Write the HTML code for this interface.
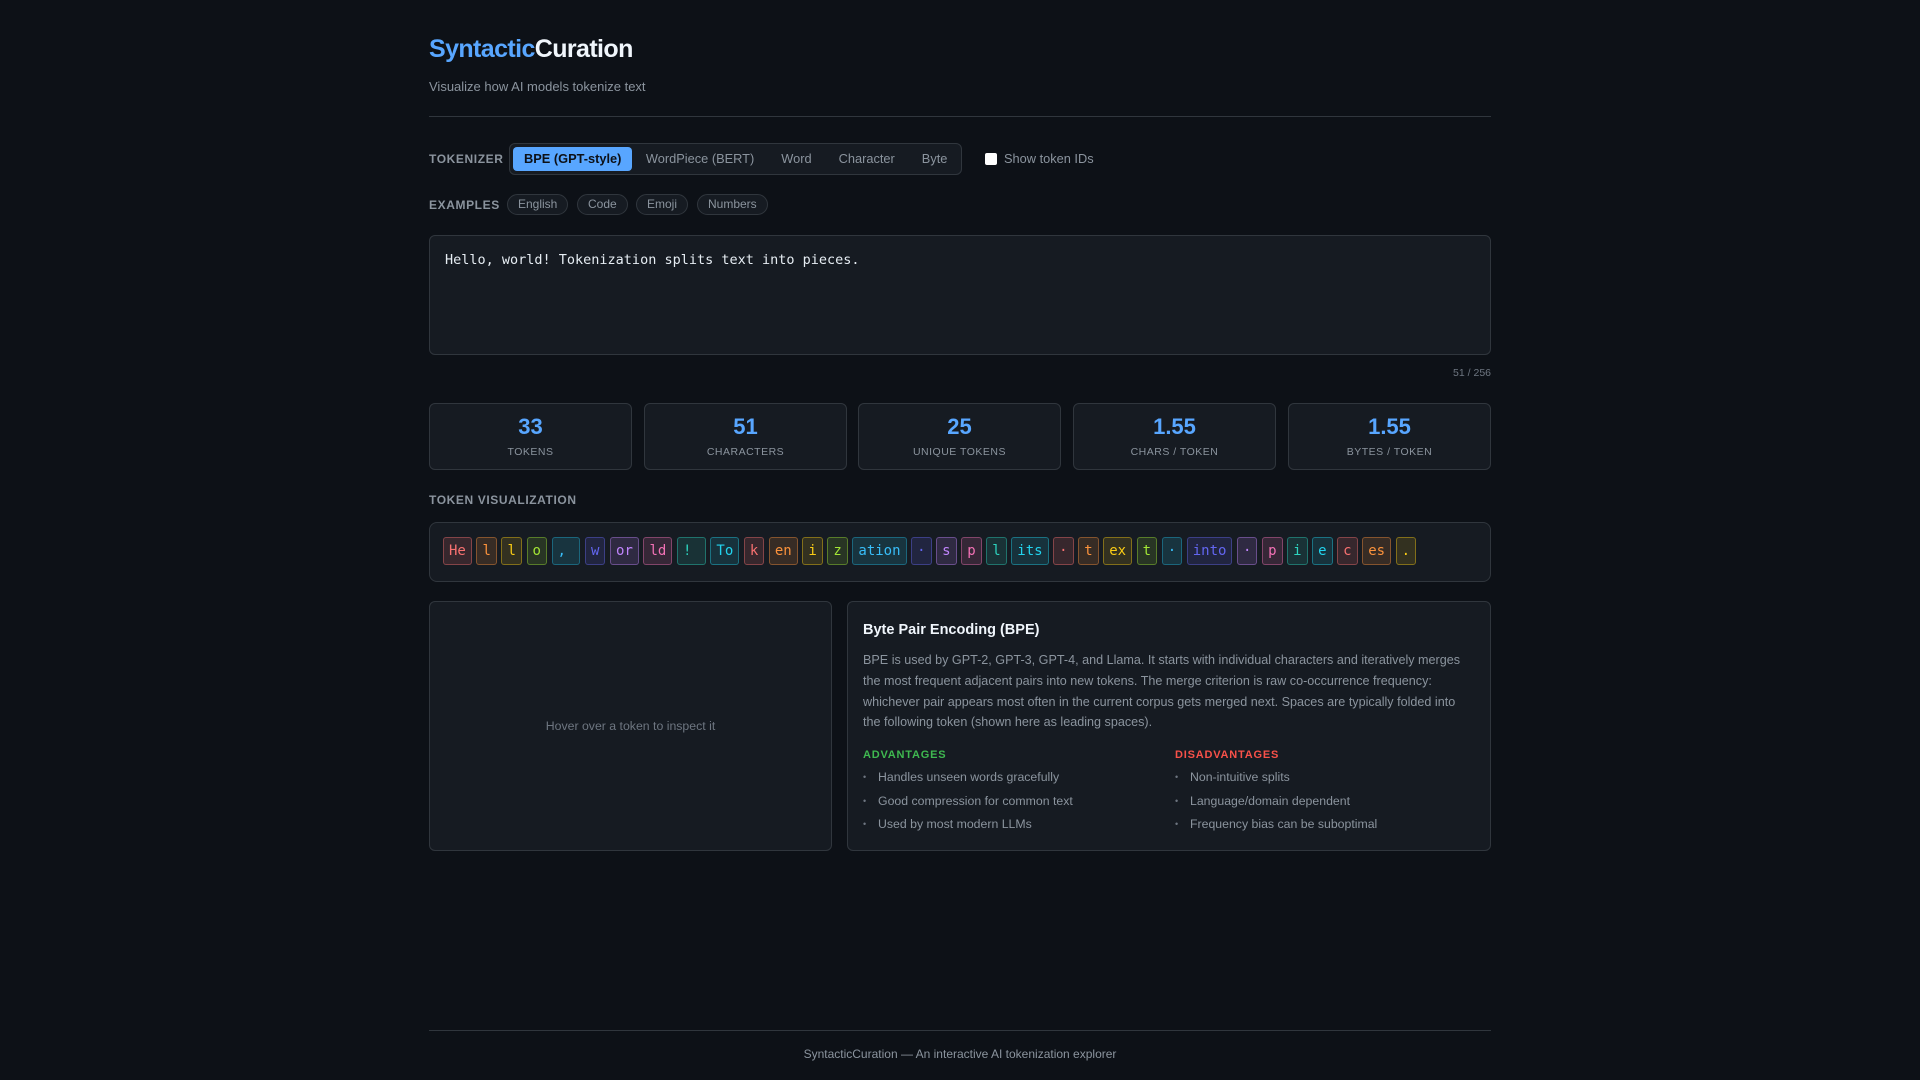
<!DOCTYPE html>
<html><head><meta charset="utf-8"><style>
*{box-sizing:border-box;margin:0;padding:0}
body{width:1920px;height:1080px;background:#0d1117;font-family:"Liberation Sans",sans-serif;color:#c9d1d9;position:relative;overflow:hidden}
.a{position:absolute}
.title{left:429px;top:35px;font-size:25px;font-weight:bold;letter-spacing:-0.6px;color:#f0f6fc}
.title span{color:#58a6ff}
.sub{left:429px;top:79px;font-size:13px;color:#8b949e}
.hr{left:429px;width:1062px;top:116px;height:1px;background:#30363d}
.lab{font-size:12px;font-weight:bold;letter-spacing:.6px;color:#8b949e}
.seg{left:509px;top:143px;width:453px;height:32px;border:1px solid #30363d;border-radius:6px;background:#161b22;display:flex;align-items:center;padding:0 3px;gap:0;white-space:nowrap}
.seg div{font-size:12.8px;color:#8b949e;padding:0 13.5px;height:24px;line-height:24px;border-radius:4px;white-space:nowrap}
.seg .on{background:#58a6ff;color:#0d1117;font-weight:bold;padding:0 11px}
.cb{left:985px;top:153px;width:12px;height:12px;background:#fff;border-radius:2px}
.pill{top:194px;height:21px;border:1px solid #30363d;border-radius:11px;background:#161b22;font-size:12px;color:#8b949e;line-height:19px;padding:0 10px}
.ta{left:429px;top:235px;width:1062px;height:120px;background:#161b22;border:1px solid #30363d;border-radius:6px;padding:16px 15px;font-family:"DejaVu Sans Mono",monospace;font-size:13.5px;color:#e6edf3}
.card{top:403px;width:203px;height:67px;background:#161b22;border:1px solid #30363d;border-radius:6px;text-align:center}
.card b{display:block;font-size:22px;color:#58a6ff;margin-top:10px;height:26px}
.card i{display:block;font-style:normal;font-size:10.5px;letter-spacing:.5px;color:#8b949e;margin-top:6px}
.tb{left:429px;top:522px;width:1062px;height:60px;background:#161b22;border:1px solid #30363d;border-radius:8px;padding:14px 0 0 13px;display:flex;gap:4.6px}
.t{height:28px;line-height:26px;padding:0 5px;border-radius:3px;border:1px solid;font-family:"DejaVu Sans Mono",monospace;font-size:14px}
.c0{color:#f87171;background:rgba(248,113,113,.15);border-color:rgba(248,113,113,.4)}
.c1{color:#fb923c;background:rgba(251,146,60,.15);border-color:rgba(251,146,60,.4)}
.c2{color:#facc15;background:rgba(250,204,21,.13);border-color:rgba(250,204,21,.4)}
.c3{color:#a3e635;background:rgba(163,230,53,.13);border-color:rgba(163,230,53,.4)}
.c4{color:#38bdf8;background:rgba(34,165,200,.18);border-color:rgba(34,165,200,.45)}
.c5{color:#6366f1;background:rgba(99,102,241,.15);border-color:rgba(99,102,241,.4)}
.c6{color:#c084fc;background:rgba(192,132,252,.15);border-color:rgba(192,132,252,.4)}
.c7{color:#f472b6;background:rgba(244,114,182,.15);border-color:rgba(244,114,182,.4)}
.c8{color:#2dd4bf;background:rgba(45,212,191,.13);border-color:rgba(45,212,191,.4)}
.c9{color:#22d3ee;background:rgba(34,211,238,.13);border-color:rgba(34,211,238,.4)}
.pan{top:601px;height:250px;background:#161b22;border:1px solid #30363d;border-radius:6px}
.desc{font-size:12.6px;line-height:20.8px;color:#8b949e}
ul{list-style:none}
li{font-size:12.3px;color:#8b949e;height:23.5px;position:relative;padding-left:15px}
li:before{content:"•";position:absolute;left:0;top:2px;color:#6e7681;font-size:9px}
</style></head><body>
<div class="a title"><span>Syntactic</span>Curation</div>
<div class="a sub">Visualize how AI models tokenize text</div>
<div class="a hr"></div>
<div class="a lab" style="left:429px;top:152px">TOKENIZER</div>
<div class="a seg"><div class="on">BPE (GPT-style)</div><div>WordPiece (BERT)</div><div>Word</div><div>Character</div><div>Byte</div></div>
<div class="a cb"></div>
<div class="a" style="left:1004px;top:151px;font-size:12.8px;color:#8b949e">Show token IDs</div>
<div class="a lab" style="left:429px;top:198px">EXAMPLES</div>
<div class="a pill" style="left:507px">English</div>
<div class="a pill" style="left:577px">Code</div>
<div class="a pill" style="left:636px">Emoji</div>
<div class="a pill" style="left:697px">Numbers</div>
<div class="a ta">Hello, world! Tokenization splits text into pieces.</div>
<div class="a" style="right:429px;top:367px;font-size:10.5px;color:#6e7681">51 / 256</div>
<div class="a card" style="left:429px"><b>33</b><i>TOKENS</i></div>
<div class="a card" style="left:644px"><b>51</b><i>CHARACTERS</i></div>
<div class="a card" style="left:858px"><b>25</b><i>UNIQUE TOKENS</i></div>
<div class="a card" style="left:1073px"><b>1.55</b><i>CHARS / TOKEN</i></div>
<div class="a card" style="left:1288px"><b>1.55</b><i>BYTES / TOKEN</i></div>
<div class="a lab" style="left:429px;top:493px">TOKEN VISUALIZATION</div>
<div class="a tb">
<span class="t c0">He</span><span class="t c1">l</span><span class="t c2">l</span><span class="t c3">o</span><span class="t c4">,&nbsp;</span><span class="t c5">w</span><span class="t c6">or</span><span class="t c7">ld</span><span class="t c8">!&nbsp;</span><span class="t c9">To</span><span class="t c0">k</span><span class="t c1">en</span><span class="t c2">i</span><span class="t c3">z</span><span class="t c4">ation</span><span class="t c5">·</span><span class="t c6">s</span><span class="t c7">p</span><span class="t c8">l</span><span class="t c9">its</span><span class="t c0">·</span><span class="t c1">t</span><span class="t c2">ex</span><span class="t c3">t</span><span class="t c4">·</span><span class="t c5">into</span><span class="t c6">·</span><span class="t c7">p</span><span class="t c8">i</span><span class="t c9">e</span><span class="t c0">c</span><span class="t c1">es</span><span class="t c2">.</span>
</div>
<div class="a pan" style="left:429px;width:403px"><div style="text-align:center;margin-top:117px;font-size:12.3px;color:#6e7681">Hover over a token to inspect it</div></div>
<div class="a pan" style="left:847px;width:644px;padding:20px 15px">
<div style="font-size:14.5px;font-weight:bold;color:#f0f6fc">Byte Pair Encoding (BPE)</div>
<div class="desc" style="margin-top:12px">BPE is used by GPT-2, GPT-3, GPT-4, and Llama. It starts with individual characters and iteratively merges the most frequent adjacent pairs into new tokens. The merge criterion is raw co-occurrence frequency: whichever pair appears most often in the current corpus gets merged next. Spaces are typically folded into the following token (shown here as leading spaces).</div>
<div style="display:flex;margin-top:16px">
<div style="width:312px"><div style="font-size:11px;font-weight:bold;letter-spacing:.8px;color:#3fb950;margin-bottom:9px">ADVANTAGES</div><ul><li>Handles unseen words gracefully</li><li>Good compression for common text</li><li>Used by most modern LLMs</li></ul></div>
<div><div style="font-size:11px;font-weight:bold;letter-spacing:.8px;color:#f85149;margin-bottom:9px">DISADVANTAGES</div><ul><li>Non-intuitive splits</li><li>Language/domain dependent</li><li>Frequency bias can be suboptimal</li></ul></div>
</div></div>
<div class="a" style="left:429px;width:1062px;top:1030px;height:1px;background:#30363d"></div>
<div class="a" style="left:429px;width:1062px;top:1047px;text-align:center;font-size:12px;color:#8b949e">SyntacticCuration — An interactive AI tokenization explorer</div>
</body></html>
